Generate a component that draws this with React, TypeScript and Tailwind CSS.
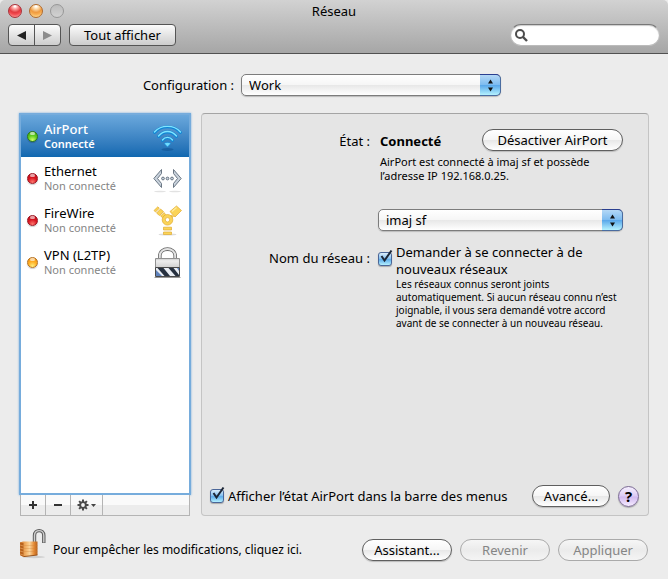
import React, { useState } from 'react';
import clsx from 'clsx';

type Status = 'green' | 'red' | 'orange';

interface Service {
  name: string;
  state: string;
  status: Status;
  icon: React.ReactNode;
}

const AirPortIcon = () => (
  <svg width="30" height="30" viewBox="0 0 30 30" fill="none" aria-hidden="true">
    <ellipse cx="14.5" cy="28.5" rx="6" ry="1.5" fill="#0b4c8c" opacity="0.5" />
    <g stroke="#0f86d6" strokeWidth="2.8" strokeLinecap="round">
      <path d="M1.5 11.500C8 4 21 4 27.500 11.500" />
      <path d="M5.500 15.500C10.500 9.500 18.500 9.500 23.500 15.500" />
      <path d="M9.500 19.500C12 16 17 16 19.500 19.500" />
    </g>
    <g stroke="#7fe4ff" strokeWidth="1.4" strokeLinecap="round">
      <path d="M1.500 11C8 3.500 21 3.500 27.500 11" />
      <path d="M5.500 15C10.500 9 18.500 9 23.500 15" />
      <path d="M9.500 19C12 15.500 17 15.500 19.500 19" />
    </g>
    <path d="M11.200 22.500C13 21 16 21 17.800 22.500L14.500 26Z" fill="#6fdcff" stroke="#0f86d6" strokeWidth="0.6" />
  </svg>
);

const EthernetIcon = () => (
  <svg width="30" height="30" viewBox="0 0 30 30" fill="none" aria-hidden="true">
    <ellipse cx="7" cy="28.500" rx="6" ry="0.800" fill="#e2e2e2" />
    <ellipse cx="22" cy="28.500" rx="6" ry="0.800" fill="#e2e2e2" />
    <g fill="#c9d2dc" stroke="#5f6c7b" strokeWidth="0.900" strokeLinejoin="round">
      <path d="M8.500 6.500V10.500L4.500 15.500L8.500 20.500V24.500L0.800 15.500Z" />
      <path d="M20.500 6.500V10.500L24.500 15.500L20.500 20.500V24.500L28.200 15.500Z" />
      <circle cx="10" cy="15.500" r="1.400" />
      <circle cx="14.500" cy="15.500" r="1.400" />
      <circle cx="19" cy="15.500" r="1.400" />
    </g>
  </svg>
);

const FireWireIcon = () => (
  <svg width="30" height="32" viewBox="0 0 30 32" aria-hidden="true">
    <ellipse cx="14.500" cy="30.500" rx="9" ry="1" fill="#ddd" />
    <g fill="#fbd458" stroke="#dfaa32" strokeWidth="0.700" strokeLinejoin="round">
      <path d="M17 7.500L23.500 2L28.500 6.500L22 13Z" />
      <path d="M18.500 11L20.500 12.500L18.500 14L17 12.500Z" />
      <path d="M1 6.500L4.800 2.800L6.300 4.300L2.500 8Z" />
      <path d="M3.500 9L7.500 5L10.500 7.500L6.500 11.500Z" />
      <path d="M7.500 12L11 8.500L12.500 10.500L9.500 13.500Z" />
      <path fillRule="evenodd" d="M14.500 10.500A5.300 5.300 0 1 1 14.500 21.100A5.300 5.300 0 1 1 14.500 10.500ZM14.500 13.600A2.200 2.200 0 1 0 14.500 18A2.200 2.200 0 1 0 14.500 13.600Z" />
      <path d="M10.500 23.200H18.500V26H10.500Z" />
      <path d="M10.500 28H18.500V30.500H10.500Z" />
    </g>
    <path d="M19 7.500L23.500 3.500" stroke="#ffec9e" strokeWidth="1.200" />
  </svg>
);

const VpnIcon = () => (
  <svg width="30" height="32" viewBox="0 0 30 32" aria-hidden="true">
    <defs>
      <linearGradient id="vpnBody" x1="0" y1="0" x2="0" y2="1">
        <stop offset="0" stopColor="#c8c8c8" />
        <stop offset="0.250" stopColor="#ededed" />
        <stop offset="1" stopColor="#cfcfcf" />
      </linearGradient>
      <clipPath id="vpnBand">
        <path d="M3 22H26V30H3Z" />
      </clipPath>
    </defs>
    <path d="M6.800 13V10C6.800 0.800 22.200 0.800 22.200 10V13" fill="none" stroke="#666" strokeWidth="3.600" />
    <path d="M6.800 13V10C6.800 0.800 22.200 0.800 22.200 10V13" fill="none" stroke="#e2e2e2" strokeWidth="2" />
    <path d="M2.500 12.500H26.500V22H2.500Z" fill="url(#vpnBody)" stroke="#909090" />
    <path d="M2.500 21.500H26.500V30.500H2.500Z" fill="#e9edf3" stroke="#4a4a4a" />
    <g clipPath="url(#vpnBand)">
      <path d="M3 24L9 30H3Z" fill="#5e82bc" />
      <path d="M4.500 22H10.500L17 30H11.500Z" fill="#26303f" />
      <path d="M15.500 22H20.500L26 29V30H22.500Z" fill="#26303f" />
      <path d="M24 22H26V25Z" fill="#5e82bc" />
    </g>
    <path d="M1.500 31.500H27.500" stroke="#999" />
  </svg>
);

const PadlockIcon = () => (
  <svg width="28" height="32" viewBox="0 0 28 32" aria-hidden="true">
    <defs>
      <linearGradient id="lockBody" x1="0" y1="0" x2="1" y2="0">
        <stop offset="0" stopColor="#d37a2c" />
        <stop offset="0.350" stopColor="#f3b46a" />
        <stop offset="0.550" stopColor="#fbd49a" />
        <stop offset="0.800" stopColor="#e58a34" />
        <stop offset="1" stopColor="#b5601c" />
      </linearGradient>
    </defs>
    <ellipse cx="15" cy="29" rx="11" ry="1.200" fill="#cfcfcf" />
    <path d="M15.500 15V7.500C15.500 1 24.800 1 24.800 7.500V15" fill="none" stroke="#5c5c5c" strokeWidth="3.400" />
    <path d="M15.500 15V7.500C15.500 1 24.800 1 24.800 7.500V14.500" fill="none" stroke="#cfcfcf" strokeWidth="1.400" />
    <path d="M1 14.500L4 13.500H18.500V27L5 29L1 27Z" fill="url(#lockBody)" />
    <path d="M1 14.500L4.500 15V29L1 27Z" fill="#b8621d" />
    <path d="M1 17L4.500 18M1 20L4.500 21M1 23L4.500 24M1 26L4.500 27" stroke="#e8a560" strokeWidth="0.700" />
    <path d="M5 17.500H18.500M5 20.500H18.500M5 23.500H18.500" stroke="#cf8038" strokeWidth="0.600" opacity="0.500" />
    <path d="M4.500 28.600L18.500 27" stroke="#8d4a15" strokeWidth="0.900" />
  </svg>
);

const GearIcon = () => (
  <svg width="20" height="12" viewBox="0 0 20 12" aria-hidden="true">
    <g stroke="#4a4a4a" strokeWidth="2">
      <path d="M6 0.500V11.500M0.500 6H11.500M2.100 2.100L9.900 9.900M9.900 2.100L2.100 9.900" />
    </g>
    <circle cx="6" cy="6" r="3.800" fill="#4a4a4a" />
    <circle cx="6" cy="6" r="1.900" fill="#f4f4f4" />
    <path d="M14 5H19L16.500 8Z" fill="#444" />
  </svg>
);

const services: Service[] = [
  { name: 'AirPort', state: 'Connecté', status: 'green', icon: <AirPortIcon /> },
  { name: 'Ethernet', state: 'Non connecté', status: 'red', icon: <EthernetIcon /> },
  { name: 'FireWire', state: 'Non connecté', status: 'red', icon: <FireWireIcon /> },
  { name: 'VPN (L2TP)', state: 'Non connecté', status: 'orange', icon: <VpnIcon /> },
];

const statusStyles: Record<Status, string> = {
  green: 'border-[#2f7a14] bg-[radial-gradient(circle_at_50%_90%,#d4ff6a,#5fcc1e_50%,#3fa012)]',
  red: 'border-[#9a1420] bg-[radial-gradient(circle_at_50%_90%,#ff7a70,#d8141f_50%,#b80f1a)]',
  orange: 'border-[#b4701e] bg-[radial-gradient(circle_at_50%_90%,#fff080,#ffac20_50%,#ec8e14)]',
};

const StatusDot = ({ status }: { status: Status }) => (
  <span className={clsx('flex h-[11px] w-[11px] shrink-0 justify-center rounded-full border shadow-[0_1px_1px_#0003]', statusStyles[status])}>
    <span className="h-[3px] w-[5px] rounded-full bg-white/60" />
  </span>
);

interface PillButtonProps {
  children: React.ReactNode;
  className?: string;
  disabled?: boolean;
}

const PillButton: React.FC<PillButtonProps> = ({ children, className, disabled }) => (
  <button
    type="button"
    disabled={disabled}
    className={clsx(
      'flex h-[22px] items-center justify-center rounded-full border whitespace-nowrap',
      disabled
        ? 'border-[#aaa] bg-linear-to-b from-[#f6f6f6] via-[#ebebeb] to-[#f4f4f4] text-[#858585]'
        : 'border-[#5f5f5f] bg-[linear-gradient(#fff,#f6f6f6_48%,#e8e8e8_52%,#fff)] shadow-[0_1px_1px_#bbb]',
      className
    )}
  >
    {children}
  </button>
);

interface PopUpProps {
  id?: string;
  label?: string;
  value: string;
  className?: string;
}

const PopUp: React.FC<PopUpProps> = ({ id, label, value, className }) => (
  <div className={clsx('relative h-[22px]', className)}>
    <select
      id={id}
      aria-label={label}
      className="block h-full w-full appearance-none rounded-[5px] border border-[#7c7c7c] bg-[linear-gradient(#fff,#f6f6f6_48%,#e8e8e8_52%,#fff)] pl-[7px] shadow-[0_1px_1px_#bbb]"
    >
      <option>{value}</option>
    </select>
    <span className="pointer-events-none absolute inset-y-0 right-0 flex w-[21px] items-center justify-center rounded-r-[5px] border border-l-0 border-[#4a6ca0] border-t-[#2a3f90] bg-[linear-gradient(#b4d8f6,#7ebcf0_48%,#5aa8ea_52%,#b4f2ff)]">
      <svg width="7" height="13" viewBox="0 0 7 13" fill="#111" aria-hidden="true">
        <path d="M3.500 0.500L6 4.500H1Z" />
        <path d="M3.500 12.500L6 8.500H1Z" />
      </svg>
    </span>
  </div>
);

const CheckBox = ({ id }: { id: string }) => {
  const [checked, setChecked] = useState(true);

  return (
    <span className="relative block h-[14px] w-[14px] shrink-0">
      <input
        id={id}
        type="checkbox"
        checked={checked}
        onChange={() => setChecked(!checked)}
        className="block h-full w-full appearance-none rounded-[3px] border border-[#6f7480] bg-white shadow-[0_1px_1px_#aaa] checked:border-[#4a6698] checked:bg-[linear-gradient(#dceefb,#7fbdf0_50%,#5fadea_55%,#b4f0ff)]"
      />
      {checked && (
        <svg className="pointer-events-none absolute -top-1 left-0" width="16" height="17" viewBox="0 0 16 17" fill="none" aria-hidden="true">
          <path d="M3.500 8L6.500 12.500L13.500 2.500" stroke="#1c2636" strokeWidth="2" />
        </svg>
      )}
    </span>
  );
};

const App: React.FC = () => {
  const [selected, setSelected] = useState('AirPort');

  return (
    <div className="flex min-h-screen flex-col bg-[#ececec] font-['Noto_Sans','Lucida_Grande',sans-serif] text-[13px] leading-4 text-black">
      <header className="rounded-t-[5px] border-b border-[#515151] bg-linear-to-b from-[#d2d2d2] to-[#a6a6a6] px-2 pb-[7px]">
        <div className="grid h-6 grid-cols-[1fr_auto_1fr] items-start">
          <div className="flex gap-[7px] pt-1">
            <button type="button" aria-label="Fermer" className="h-[14px] w-[14px] rounded-full border border-[#a8323a] bg-[radial-gradient(circle_at_50%_10%,#fff_5%,#ffb0ac_20%,#e23a40_50%,#f24a50_65%,#ffb4b0)]" />
            <button type="button" aria-label="Réduire" className="h-[14px] w-[14px] rounded-full border border-[#b06a2c] bg-[radial-gradient(circle_at_50%_10%,#fff_5%,#ffe2b8_20%,#ee9a40_50%,#f8ac50_65%,#ffeeb0)]" />
            <button type="button" aria-label="Agrandir" disabled className="h-[14px] w-[14px] rounded-full border border-[#979797] bg-linear-to-b from-[#bcbcbc] to-[#d2d2d2]" />
          </div>
          <h1 className="pt-[3px]">Réseau</h1>
        </div>
        <div className="flex items-center">
          <div className="flex h-[22px] rounded-[4px] border border-[#555] bg-linear-to-b from-[#fcfcfc] to-[#cdcdcd]">
            <button type="button" aria-label="Précédent" className="flex w-[26px] items-center justify-center border-r border-[#555]">
              <svg width="9" height="9" viewBox="0 0 9 9" aria-hidden="true"><path d="M0 4.500L9 0V9Z" fill="#222" /></svg>
            </button>
            <button type="button" aria-label="Suivant" disabled className="flex w-[25px] items-center justify-center">
              <svg width="9" height="9" viewBox="0 0 9 9" aria-hidden="true"><path d="M9 4.500L0 0V9Z" fill="#8c8c8c" /></svg>
            </button>
          </div>
          <button type="button" className="ml-2 flex h-[22px] items-center rounded-[4px] border border-[#555] bg-linear-to-b from-[#fcfcfc] to-[#cdcdcd] px-[14px]">
            Tout afficher
          </button>
          <label className="ml-auto flex h-[22px] w-[150px] items-center gap-1 rounded-full border border-[#bbb] border-t-[#777] bg-white pl-1 shadow-[inset_0_1px_1px_#ccc]">
            <svg width="13" height="13" viewBox="0 0 13 13" fill="none" stroke="#4c4c4c" aria-hidden="true">
              <circle cx="5" cy="5" r="4" strokeWidth="2" />
              <path d="M8 8L12 12" strokeWidth="2.400" />
            </svg>
            <input type="search" aria-label="Rechercher" className="min-w-0 flex-1 bg-transparent outline-none" />
          </label>
        </div>
      </header>

      <div className="flex items-center justify-center gap-[7px] pt-5 pr-[24px] pb-[17px]">
        <label htmlFor="configuration">Configuration :</label>
        <PopUp id="configuration" value="Work" className="w-[260px]" />
      </div>

      <main className="flex flex-1 gap-[10px] px-[19px]">
        <aside className="flex w-[172px] shrink-0 flex-col">
          <ul className="flex-1 border-2 border-[#76acdc] bg-white shadow-[0_0_2px_#76acdc]">
            {services.map((service) => {
              const active = service.name === selected;
              return (
                <li key={service.name}>
                  <button
                    type="button"
                    onClick={() => setSelected(service.name)}
                    className={clsx(
                      'flex h-[42px] w-full items-center gap-[6px] pr-[6px] pl-[6px] text-left',
                      active && 'bg-linear-to-b from-[#6aa8dc] to-[#0f68b0] text-white'
                    )}
                  >
                    <StatusDot status={service.status} />
                    <span className="flex-1">
                      <span className={clsx('block leading-[15px]', active && 'font-medium')}>{service.name}</span>
                      <span className={clsx('block text-[11px] leading-[14px]', active ? 'font-semibold' : 'text-[#858585]')}>
                        {service.state}
                      </span>
                    </span>
                    {service.icon}
                  </button>
                </li>
              );
            })}
          </ul>
          <div className="mx-px flex h-[21px] border border-t-0 border-[#b4b4b4] bg-[linear-gradient(#fafafa_50%,#ececec_50%)]">
            <button type="button" aria-label="Ajouter" className="flex w-[25px] items-center justify-center border-r border-[#b4b4b4]">
              <svg width="8" height="8" viewBox="0 0 8 8" stroke="#333" strokeWidth="2" aria-hidden="true"><path d="M4 0V8M0 4H8" /></svg>
            </button>
            <button type="button" aria-label="Supprimer" className="flex w-[25px] items-center justify-center border-r border-[#b4b4b4]">
              <svg width="8" height="8" viewBox="0 0 8 8" stroke="#333" strokeWidth="2" aria-hidden="true"><path d="M0 4H8" /></svg>
            </button>
            <button type="button" aria-label="Actions" className="flex w-8 items-center justify-center border-r border-[#b4b4b4]">
              <GearIcon />
            </button>
          </div>
        </aside>

        <section className="flex min-w-0 flex-1 flex-col rounded-[4px] border border-[#c4c4c4] border-t-[#a4a4a4] bg-[#e5e5e5] pb-2">
          <div className="grid grid-cols-[168px_1fr] gap-x-[10px] pt-[15px] pr-[25px]">
            <p className="pt-1 text-right">État :</p>
            <div>
              <div className="flex items-start justify-between">
                <strong className="pt-1 font-bold">Connecté</strong>
                <PillButton className="w-[141px]">Désactiver AirPort</PillButton>
              </div>
              <p className="pt-1 text-[11px] leading-[14px]">
                AirPort est connecté à imaj sf et possède
                <br />
                l’adresse IP 192.168.0.25.
              </p>
            </div>

            <PopUp label="Réseau AirPort" value="imaj sf" className="col-start-2 mt-[26px] -ml-[2px]" />

            <p className="pt-[19px] text-right">Nom du réseau :</p>
            <div className="-ml-[2px] flex gap-1 pt-[13px]">
              <span className="pt-2">
                <CheckBox id="ask-join" />
              </span>
              <div>
                <label htmlFor="ask-join" className="block leading-[17px]">
                  Demander à se connecter à de
                  <br />
                  nouveaux réseaux
                </label>
                <p className="text-[10px] leading-[13px] whitespace-nowrap">
                  Les réseaux connus seront joints
                  <br />
                  automatiquement. Si aucun réseau connu n’est
                  <br />
                  joignable, il vous sera demandé votre accord
                  <br />
                  avant de se connecter à un nouveau réseau.
                </p>
              </div>
            </div>
          </div>

          <div className="mt-auto flex items-center pr-[9px] pl-2">
            <CheckBox id="show-status" />
            <label htmlFor="show-status" className="ml-1 whitespace-nowrap">
              Afficher l’état AirPort dans la barre des menus
            </label>
            <PillButton className="ml-auto w-[78px]">Avancé...</PillButton>
            <button
              type="button"
              aria-label="Aide"
              className="ml-2 flex h-[21px] w-[21px] items-center justify-center rounded-full border border-[#7b6a94] bg-[linear-gradient(#f6f0ff,#dccaf4_48%,#d0b8f0_52%,#f6ecff)] text-[15px] font-bold shadow-[0_1px_1px_#aaa]"
            >
              ?
            </button>
          </div>
        </section>
      </main>

      <footer className="flex h-[63px] items-center gap-[6px] pt-1 pr-5 pl-[19px]">
        <button type="button" aria-label="Verrouiller" className="mb-3">
          <PadlockIcon />
        </button>
        <p className="text-xs">Pour empêcher les modifications, cliquez ici.</p>
        <div className="ml-auto flex gap-2">
          <PillButton className="w-[90px]">Assistant...</PillButton>
          <PillButton className="w-[90px]" disabled>Revenir</PillButton>
          <PillButton className="w-[90px]" disabled>Appliquer</PillButton>
        </div>
      </footer>
    </div>
  );
};

export default App;
